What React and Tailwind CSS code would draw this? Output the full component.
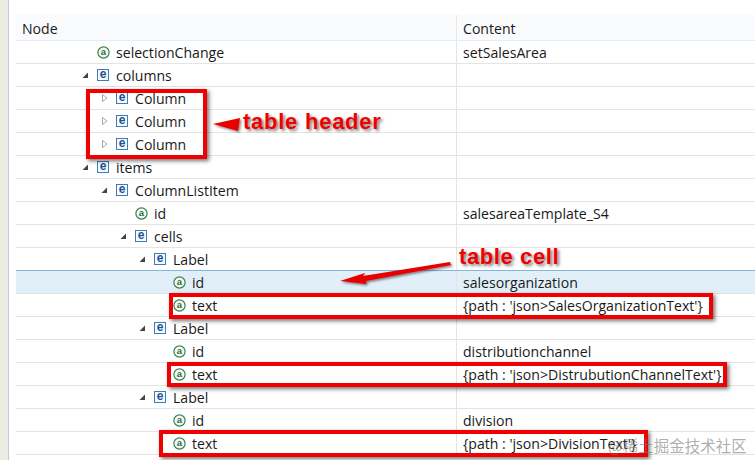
import React from "react";

const rows = [
    { name: "selectionChange", kind: "a", indent: "pl-[65px]", content: "setSalesArea" },
    { name: "columns", kind: "e", arrow: "open", indent: "pl-[65px]" },
    { name: "Column", kind: "e", arrow: "closed", indent: "pl-[84px]" },
    { name: "Column", kind: "e", arrow: "closed", indent: "pl-[84px]" },
    { name: "Column", kind: "e", arrow: "closed", indent: "pl-[84px]" },
    { name: "items", kind: "e", arrow: "open", indent: "pl-[65px]" },
    { name: "ColumnListItem", kind: "e", arrow: "open", indent: "pl-[84px]" },
    { name: "id", kind: "a", indent: "pl-[103px]", content: "salesareaTemplate_S4" },
    { name: "cells", kind: "e", arrow: "open", indent: "pl-[103px]" },
    { name: "Label", kind: "e", arrow: "open", indent: "pl-[122px]" },
    { name: "id", kind: "a", indent: "pl-[141px]", content: "salesorganization", selected: true },
    { name: "text", kind: "a", indent: "pl-[141px]", content: "{path : 'json>SalesOrganizationText'}" },
    { name: "Label", kind: "e", arrow: "open", indent: "pl-[122px]" },
    { name: "id", kind: "a", indent: "pl-[141px]", content: "distributionchannel" },
    { name: "text", kind: "a", indent: "pl-[141px]", content: "{path : 'json>DistrubutionChannelText'}" },
    { name: "Label", kind: "e", arrow: "open", indent: "pl-[122px]" },
    { name: "id", kind: "a", indent: "pl-[141px]", content: "division" },
    { name: "text", kind: "a", indent: "pl-[141px]", content: "{path : 'json>DivisionText'}" },
];

function Arrow({ type }) {
    if (type === "open") {
        return (
            <svg width="16" height="12" viewBox="0 0 16 12" className="shrink-0">
                <path d="M7 3.5V9H1.5Z" fill="#444444" />
            </svg>
        );
    }
    if (type === "closed") {
        return (
            <svg width="16" height="12" viewBox="0 0 16 12" className="shrink-0">
                <path d="M2.5 2.5L7 6L2.5 9.5Z" fill="#ffffff" stroke="#a8a8a8" />
            </svg>
        );
    }
    return <span className="w-4 shrink-0" />;
}

function ElementIcon() {
    return (
        <span className="flex h-3 w-3 shrink-0 items-center justify-center border border-[#3f7cb4] bg-[#f6fafd] font-['Liberation_Sans',sans-serif] text-[12px] font-bold leading-none text-[#1f4f94]">
            <span className="-mt-[2px]">e</span>
        </span>
    );
}

function AttributeIcon() {
    return (
        <svg width="13" height="13" viewBox="0 0 13 13" className="shrink-0">
            <circle cx="6.5" cy="6.5" r="5.6" fill="#f4faf4" stroke="#3c8050" strokeWidth="1.2" />
            <text x="6.5" y="9.4" textAnchor="middle" fontSize="9.5" fontWeight="700" fontFamily="Liberation Sans, sans-serif" fill="#2f6b3f">a</text>
        </svg>
    );
}

function Row({ row }) {
    return (
        <div className={`flex h-[23px] border-b border-[#e4e4e4] ${row.selected ? "border-t border-t-[#82b8d8] bg-[#e1f0f8] -mt-px h-[24px]" : ""}`}>
            <div className={`flex w-[441px] items-center border-r border-[#e4e4e4] ${row.indent}`}>
                <Arrow type={row.arrow} />
                <span className="flex w-[19px] shrink-0">{row.kind === "e" ? <ElementIcon /> : <AttributeIcon />}</span>
                <span className="pt-[2px]">{row.name}</span>
            </div>
            <div className="flex flex-1 items-center pl-[6px] pt-[2px]">{row.content}</div>
        </div>
    );
}

function RedBox({ className }) {
    return <div className={`absolute border-4 border-[#f00000] shadow-[2px_2px_4px_rgba(0,0,0,0.55)] ${className}`} />;
}

export default function App() {
    return (
        <div className="relative flex h-[460px] w-[755px] overflow-hidden bg-white font-['Open_Sans',sans-serif] text-[14.1px] text-[#1a1a1a]">
            <div className="w-[9px] shrink-0 border-r border-[#c3c8e4] bg-[#ecebe0]" />

            {/* Tree table */}
            <div className="flex-1 pl-[7px] pt-[15px]">
                <div className="flex h-[26px] border-b border-[#e3ecf8] bg-[#fafbfd]">
                    <div className="flex w-[441px] items-center border-r border-[#e6e8ec] pl-[6px] pt-[2px]">Node</div>
                    <div className="flex items-center pl-[6px] pt-[2px]">Content</div>
                </div>
                {rows.map((row, i) => (
                    <Row key={i} row={row} />
                ))}
            </div>

            {/* Annotations */}
            <RedBox className="left-[86px] top-[89px] h-[70px] w-[121px]" />
            <RedBox className="left-[169px] top-[293px] h-[26px] w-[544px]" />
            <RedBox className="left-[167px] top-[362px] h-[25px] w-[560px]" />
            <RedBox className="left-[159px] top-[430px] h-[27px] w-[489px]" />

            <svg width="755" height="460" viewBox="0 0 755 460" className="pointer-events-none absolute left-0 top-0">
                <defs>
                    <filter id="arrowShadow" x="-20%" y="-50%" width="140%" height="200%">
                        <feDropShadow dx="1.5" dy="1.5" stdDeviation="1.2" floodColor="#000000" floodOpacity="0.5" />
                    </filter>
                </defs>
                <path d="M213 124L240 118L238 131Z" fill="#e80000" filter="url(#arrowShadow)" />
                <path d="M340 281L365 273L363 276L450 262L451 265L366 281L366 284Z" fill="#e80000" filter="url(#arrowShadow)" />
            </svg>

            <div className="absolute left-[243px] top-[108px] font-['Liberation_Sans',sans-serif] text-[22px] font-bold leading-[28px] tracking-[0.75px] text-[#f00000] [text-shadow:2px_2px_3px_rgba(0,0,0,0.5)]">
                table header
            </div>
            <div className="absolute left-[459px] top-[243px] font-['Liberation_Sans',sans-serif] text-[22px] font-bold leading-[28px] tracking-[0.6px] text-[#f00000] [text-shadow:2px_2px_3px_rgba(0,0,0,0.5)]">
                table cell
            </div>

            {/* Watermark */}
            <div className="absolute left-[608px] top-[435px] font-['Noto_Sans_CJK_SC',sans-serif] text-[15.5px] leading-[20px] text-[#777777]/60">
                @稀土掘金技术社区
            </div>
        </div>
    );
}
